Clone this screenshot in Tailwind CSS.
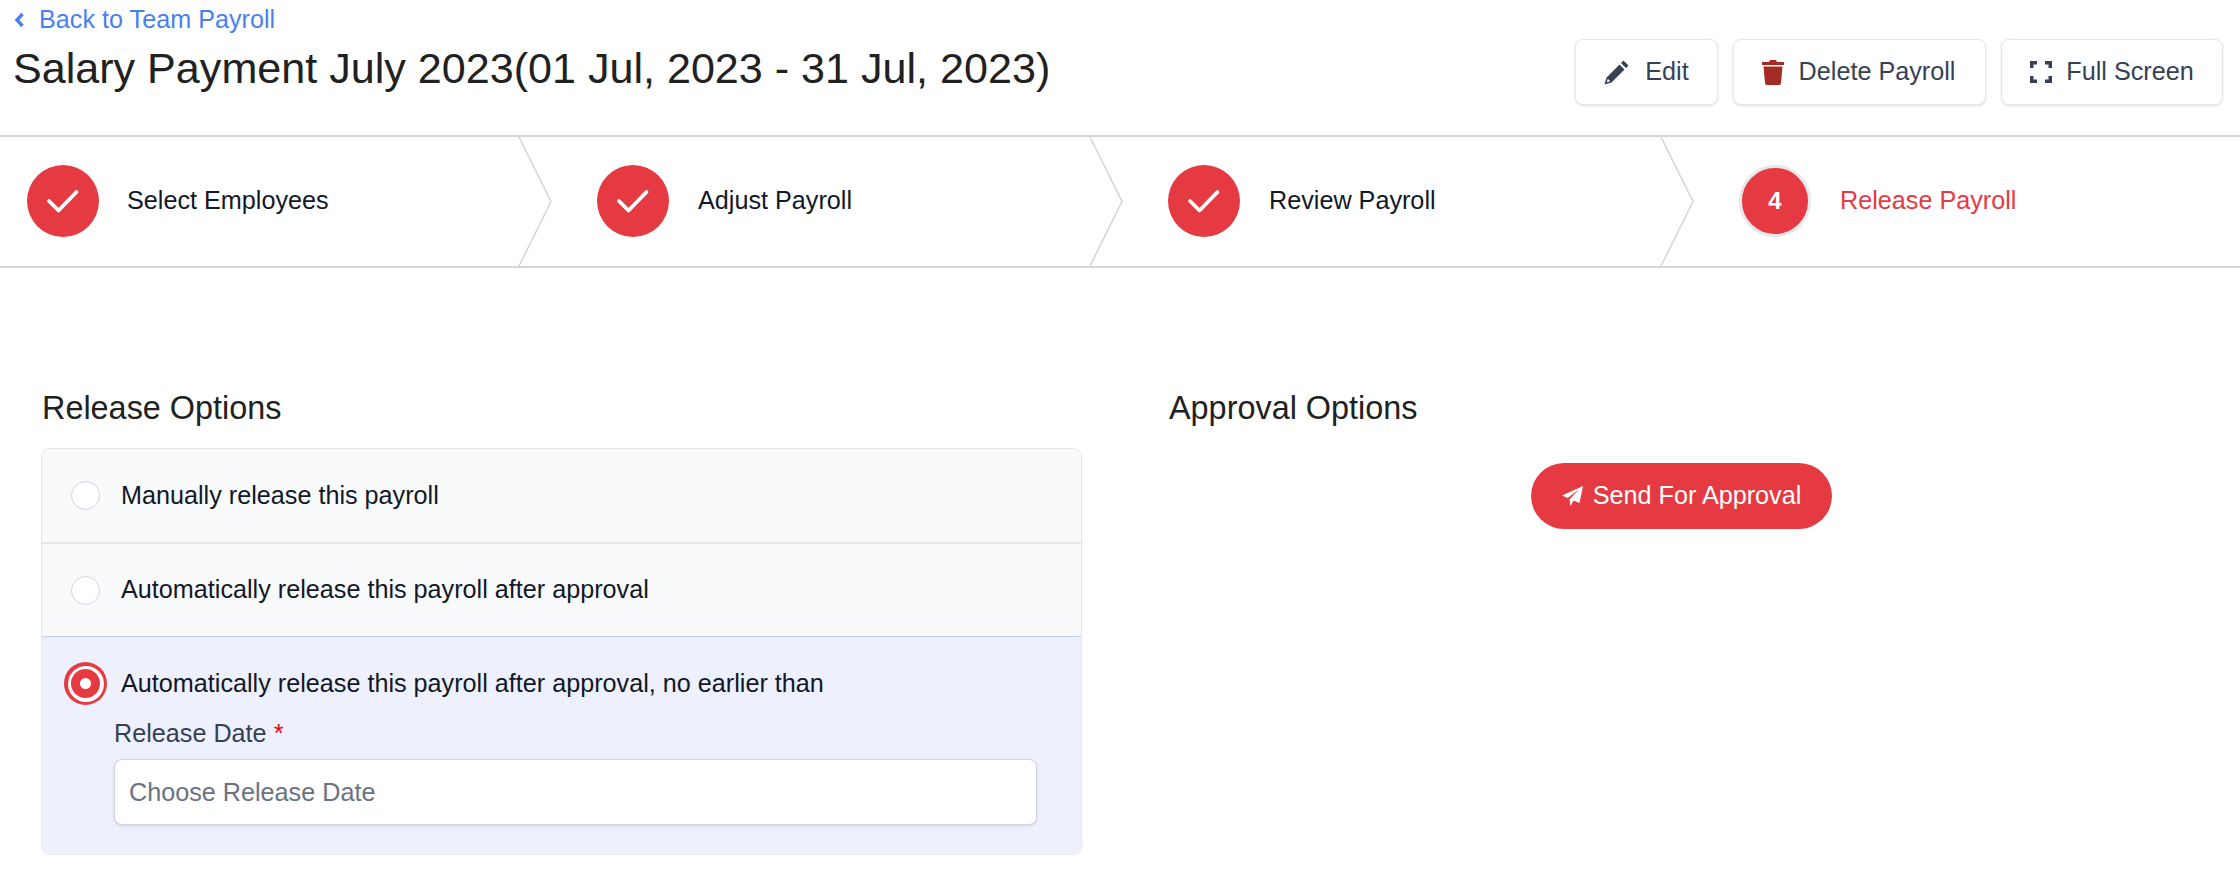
<!DOCTYPE html>
<html lang="en">
<head>
    <meta charset="UTF-8">
    <title>Salary Payment July 2023</title>
    <script src="https://cdn.jsdelivr.net/npm/@tailwindcss/browser@4"></script>
</head>
<body class="bg-white font-['Liberation_Sans',Arial,sans-serif] text-[25.2px] text-gray-900 overflow-hidden">
<div class="w-[2240px] h-[879px] overflow-hidden">
    <!-- page header -->
    <header class="flex justify-between h-[135px]">
        <div class="pl-[13px]">
            <a href="#" class="flex items-center gap-[13px] h-[40px] text-[#4a7ff0]">
                <svg class="w-[13px] h-[16px]" viewBox="0 0 13 16"><path d="M9.500 2 4 8l5.500 6" fill="none" stroke="currentColor" stroke-width="3.400"/></svg>
                <span>Back to Team Payroll</span>
            </a>
            <h1 class="text-[43.1px] leading-[50px] mt-[3px] text-[#212121]">Salary Payment July 2023(01 Jul, 2023 - 31 Jul, 2023)</h1>
        </div>
        <div class="flex gap-[15px] pt-[39px] pr-[17px]">
            <button class="flex items-center justify-center gap-[16px] w-[143px] h-[66px] bg-white border border-gray-200 rounded-[8px] shadow-sm text-gray-700">
                <svg class="w-[25px] h-[25px]" viewBox="0 0 25 25" fill="#374151"><path d="M19.500 0.500 24.500 5.500 22 8 17 3ZM15.500 4.500 20.500 9.500 7.500 22.500 0.500 24.500 2.500 17.500ZM3.800 18.800 2.800 22.200 6.200 21.200Z" fill-rule="evenodd"/></svg>
                <span>Edit</span>
            </button>
            <button class="flex items-center justify-center gap-[15px] w-[253px] h-[66px] pr-[2px] bg-white border border-gray-200 rounded-[8px] shadow-sm text-gray-700">
                <svg class="w-[22px] h-[25px]" viewBox="0 0 22 25" fill="#a52c24"><path d="M8 0h6l1 2h7v3H0V2h7ZM1.500 6.500h19L19 23a2 2 0 0 1-2 2H5a2 2 0 0 1-2-2Z"/></svg>
                <span>Delete Payroll</span>
            </button>
            <button class="flex items-center justify-center gap-[14px] w-[222px] h-[66px] bg-white border border-gray-200 rounded-[8px] shadow-sm text-gray-700">
                <svg class="w-[22px] h-[22px]" viewBox="0 0 22 22" fill="none" stroke="#374151" stroke-width="3.500"><path d="M1.750 7V1.750H7M15 1.750h5.250V7M20.250 15v5.250H15M7 20.250H1.750V15"/></svg>
                <span>Full Screen</span>
            </button>
        </div>
    </header>

    <!-- steps -->
    <nav class="flex h-[133px] border-y-2 border-gray-300">
        <div class="relative flex items-center gap-[28px] w-[570px] pl-[27px] pb-[1px] text-[#111827]">
            <div class="flex items-center justify-center w-[72px] h-[72px] rounded-full bg-[#e53a42]">
                <svg class="w-[72px] h-[72px]" viewBox="0 0 72 72"><path d="M22 36 31.500 45.500 49.500 27" fill="none" stroke="#fff" stroke-width="3.800" stroke-linecap="round" stroke-linejoin="round"/></svg>
            </div>
            <span>Select Employees</span>
            <svg class="absolute left-[518px] top-0 w-[34px] h-[129px]" viewBox="0 0 34 129"><path d="M1 0 33 64.500 1 129" fill="none" stroke="#d1d5db" stroke-width="1.500"/></svg>
        </div>
        <div class="relative flex items-center gap-[29px] w-[571px] pl-[27px] pb-[1px] text-[#111827]">
            <div class="flex items-center justify-center w-[72px] h-[72px] rounded-full bg-[#e53a42]">
                <svg class="w-[72px] h-[72px]" viewBox="0 0 72 72"><path d="M22 36 31.500 45.500 49.500 27" fill="none" stroke="#fff" stroke-width="3.800" stroke-linecap="round" stroke-linejoin="round"/></svg>
            </div>
            <span>Adjust Payroll</span>
            <svg class="absolute left-[519px] top-0 w-[34px] h-[129px]" viewBox="0 0 34 129"><path d="M1 0 33 64.500 1 129" fill="none" stroke="#d1d5db" stroke-width="1.500"/></svg>
        </div>
        <div class="relative flex items-center gap-[29px] w-[571px] pl-[27px] pb-[1px] text-[#111827]">
            <div class="flex items-center justify-center w-[72px] h-[72px] rounded-full bg-[#e53a42]">
                <svg class="w-[72px] h-[72px]" viewBox="0 0 72 72"><path d="M22 36 31.500 45.500 49.500 27" fill="none" stroke="#fff" stroke-width="3.800" stroke-linecap="round" stroke-linejoin="round"/></svg>
            </div>
            <span>Review Payroll</span>
            <svg class="absolute left-[519px] top-0 w-[34px] h-[129px]" viewBox="0 0 34 129"><path d="M1 0 33 64.500 1 129" fill="none" stroke="#d1d5db" stroke-width="1.500"/></svg>
        </div>
        <div class="flex items-center gap-[29px] pl-[27px] pb-[1px] text-[#e53a42]">
            <div class="flex items-center justify-center w-[72px] h-[72px] rounded-full bg-[#e53a42] border-[3px] border-gray-200 text-white font-bold text-[24px]">4</div>
            <span>Release Payroll</span>
        </div>
    </nav>

    <!-- options -->
    <main class="flex pt-[119px] pl-[41px]">
        <section class="w-[1041px]">
            <h2 class="text-[32.4px] leading-[42px] text-[#212121] pl-[1px]">Release Options</h2>
            <div class="mt-[19px] border border-gray-200 rounded-[9px] overflow-hidden">
                <label class="flex items-center gap-[21px] h-[95px] pl-[29px] bg-[#f9fafb] border-b-2 border-gray-200 text-[#111827]">
                    <span class="w-[29px] h-[29px] rounded-full bg-white border border-gray-300"></span>
                    Manually release this payroll
                </label>
                <label class="flex items-center gap-[21px] h-[92px] pl-[29px] bg-[#f9fafb] text-[#111827]">
                    <span class="w-[29px] h-[29px] rounded-full bg-white border border-gray-300"></span>
                    Automatically release this payroll after approval
                </label>
                <div class="h-[218px] bg-[#eef0fd] border-t border-[#c7d2fe] pt-[25px]">
                    <label class="flex items-center gap-[14px] pl-[22px] text-[#111827]">
                        <span class="flex items-center justify-center w-[43px] h-[43px] rounded-full bg-[#e53a42]">
                            <span class="flex items-center justify-center w-[36px] h-[36px] rounded-full bg-white">
                                <span class="flex items-center justify-center w-[29px] h-[29px] rounded-full bg-[#e53a42]">
                                    <span class="w-[11px] h-[11px] rounded-full bg-white"></span>
                                </span>
                            </span>
                        </span>
                        Automatically release this payroll after approval, no earlier than
                    </label>
                    <div class="pl-[72px] pr-[44px] mt-[9px]">
                        <div class="leading-[38px] text-gray-700">Release Date <span class="text-red-600">*</span></div>
                        <input type="text" placeholder="Choose Release Date" class="block w-full h-[66px] mt-[7px] px-[14px] bg-white border border-gray-300 rounded-[8px] shadow-sm placeholder:text-gray-500">
                    </div>
                </div>
            </div>
        </section>
        <section class="pl-[87px] flex-1">
            <h2 class="text-[32.4px] leading-[42px] text-[#212121]">Approval Options</h2>
            <div class="flex pl-[362px] mt-[34px]">
                <button class="flex items-center justify-center gap-[10px] w-[301px] h-[66px] rounded-full bg-[#e53a42] text-white">
                    <svg class="w-[21px] h-[20px]" viewBox="0 0 21 20" fill="#fff"><path d="M21 0 17.500 17 11.500 14.500 8.500 20 7.500 13.500 17 3.500 5.500 12 0 9.500Z"/></svg>
                    <span>Send For Approval</span>
                </button>
            </div>
        </section>
    </main>
</div>
</body>
</html>
